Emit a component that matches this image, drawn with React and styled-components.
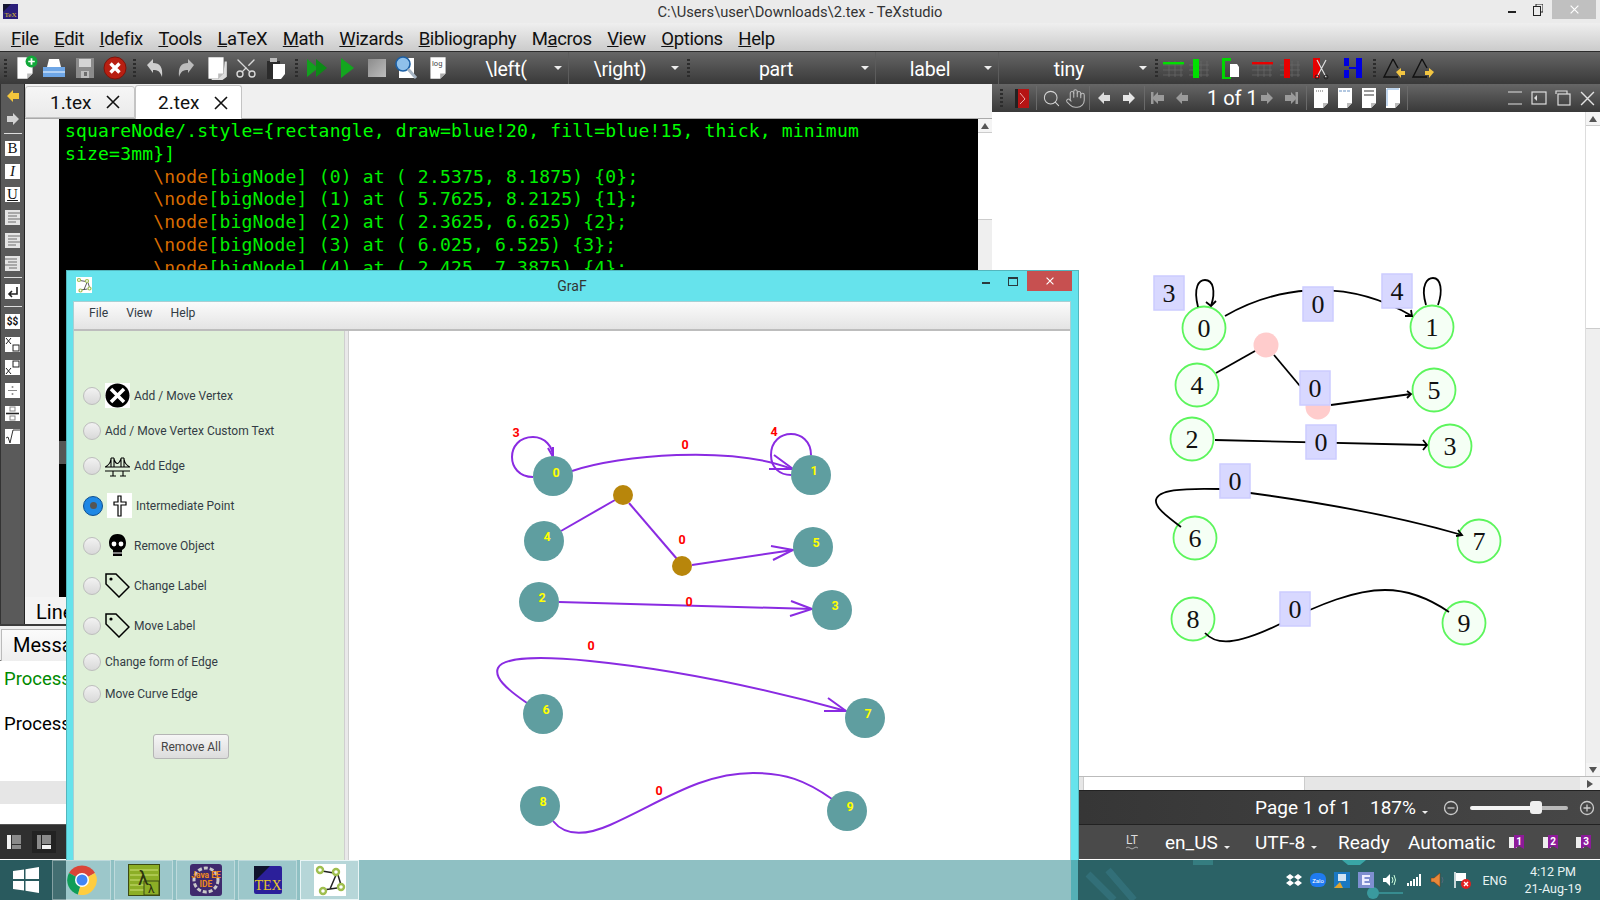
import React from "react";
import styled, { createGlobalStyle } from "styled-components";
import { Hand, Search, Scissors } from "lucide-react";

const UI = `Roboto, "Liberation Sans", sans-serif`;

const GlobalStyle = createGlobalStyle`
  html, body { margin: 0; padding: 0; background: #0c2f33; overflow: hidden; }
  #root { width: 1600px; height: 900px; }
`;

const Desktop = styled.div`
  position: relative;
  width: 1600px;
  height: 900px;
  overflow: hidden;
  display: flex;
  flex-direction: column;
  font-family: ${UI};
`;

/* ---------- TeXstudio ---------- */
const Studio = styled.div`
  height: 860px;
  display: flex;
  flex-direction: column;
  background: #fff;
`;

const TitleBar = styled.div`
  height: 23px;
  display: grid;
  grid-template-columns: 1fr auto 1fr;
  align-items: center;
  background: #ebebeb;
  color: #333;
  font-size: 14.7px;
`;

const TitleIcon = styled.div`
  padding-left: 3px;
  display: flex;
`;

const TitleControls = styled.div`
  display: flex;
  justify-content: flex-end;
  align-items: flex-start;
  height: 23px;
  padding-right: 4px;
`;

const WinBtn = styled.div`
  width: ${(p) => p.$w}px;
  height: 19px;
  display: flex;
  align-items: center;
  justify-content: center;
  background: ${(p) => p.$bg || "transparent"};
  color: #fff;
`;

const MenuBar = styled.div`
  height: 29px;
  box-sizing: border-box;
  display: flex;
  align-items: center;
  padding: 3px 0 0 11px;
  gap: 15.5px;
  background: linear-gradient(#efefef, #cbcbcb);
  color: #111;
  font-size: 18.5px;
  letter-spacing: -0.35px;
  border-bottom: 1px solid #2b2b2b;
`;

const Toolbar = styled.div`
  height: 32px;
  flex: none;
  display: flex;
  align-items: center;
  background: linear-gradient(#666, #4d4d4d 55%, #393939);
`;

const Slot = styled.div`
  width: ${(p) => p.$w}px;
  height: 100%;
  flex: none;
  display: flex;
  align-items: center;
  justify-content: center;
`;

const Grip = styled.div`
  width: ${(p) => p.$w}px;
  height: 100%;
  flex: none;
  display: flex;
  align-items: center;
  justify-content: center;
  &::before {
    content: "";
    width: 3px;
    height: 18px;
    background: repeating-linear-gradient(#2c2c2c 0 2px, transparent 2px 4px);
  }
`;

const Combo = styled.div`
  width: ${(p) => p.$w}px;
  height: 100%;
  flex: none;
  display: flex;
  align-items: center;
  color: #fff;
  font-size: 19.5px;
  letter-spacing: -0.2px;
  border-right: ${(p) => (p.$line ? "1px solid #5c5c5c" : "none")};
`;

const ComboText = styled.span`
  flex: 1;
  padding-top: 2px;
  text-align: center;
`;

const Caret = styled.span`
  width: 0;
  height: 0;
  margin-right: 6px;
  border: 4px solid transparent;
  border-top: 4px solid #eee;
  border-bottom: 0;
`;

const Workspace = styled.div`
  flex: 1;
  display: flex;
  min-height: 0;
`;

const LeftPane = styled.div`
  width: 992px;
  flex: none;
  display: flex;
  flex-direction: column;
`;

const EditorRow = styled.div`
  height: 540px;
  display: flex;
`;

const SideBar = styled.div`
  width: 25px;
  flex: none;
  display: flex;
  flex-direction: column;
  align-items: center;
  background: #5a5a5a;
  border-left: 1px solid #333;
  border-right: 1px solid #222;
  box-sizing: border-box;
`;

const SideArrow = styled.div`
  height: 23px;
  display: flex;
  align-items: center;
`;

const SideRule = styled.div`
  width: 18px;
  height: 1px;
  margin: ${(p) => (p.$tight ? "2px 0 2px" : "3px 0 3px")};
  background: #ddd;
`;

const SideBtn = styled.div`
  width: 15px;
  height: 15px;
  margin: 4px 0;
  background: ${(p) => p.$bg || "#fff"};
  color: #111;
  display: flex;
  align-items: center;
  justify-content: center;
  font: ${(p) => p.$italic ? "italic " : ""}15px "Liberation Serif", serif;
  overflow: hidden;
`;

const EditorCol = styled.div`
  flex: 1;
  min-width: 0;
  display: flex;
  flex-direction: column;
`;

const TabBar = styled.div`
  height: 35px;
  box-sizing: border-box;
  flex: none;
  display: flex;
  align-items: flex-end;
  background: #f0f0f0;
  border-bottom: 1px solid #aaa;
`;

const Tab = styled.div`
  width: ${(p) => p.$w}px;
  height: ${(p) => (p.$on ? 34 : 32)}px;
  box-sizing: border-box;
  margin-bottom: ${(p) => (p.$on ? -1 : 0)}px;
  display: flex;
  align-items: center;
  gap: 15px;
  padding-left: ${(p) => (p.$on ? 22 : 24)}px;
  background: ${(p) => (p.$on ? "#fff" : "linear-gradient(#f6f6f6,#eaeaea)")};
  border: 1px solid #c4c4c4;
  border-bottom: ${(p) => (p.$on ? "0" : "1px solid #c4c4c4")};
  border-radius: 3px 3px 0 0;
  color: #111;
  font-size: 19px;
`;

const CodeRow = styled.div`
  flex: 1;
  min-height: 0;
  display: flex;
  background: #f1f1f1;
`;

const Gutter = styled.div`
  width: 34px;
  flex: none;
`;

const Code = styled.pre`
  position: relative;
  flex: 1;
  margin: 0;
  padding: 1px 0 0 6px;
  overflow: hidden;
  background: #000;
  color: #00ee00;
  font: 18px/22.8px "DejaVu Sans Mono", "Liberation Mono", monospace;
  letter-spacing: 0.19px;
`;

const CodeLine = styled.div`
  height: 22.8px;
  color: ${(p) => (p.$bright ? "#00ff00" : "inherit")};
`;

const Keyword = styled.span`
  color: #d96c00;
`;

const CodeMark = styled.div`
  position: absolute;
  left: 0;
  top: 322px;
  width: 8px;
  height: 23px;
  background: #555;
`;

const EditorScroll = styled.div`
  width: 14px;
  flex: none;
  display: flex;
  flex-direction: column;
  background: #efefef;
`;

const ScrollEnd = styled.div`
  height: 13px;
  display: flex;
  align-items: center;
  justify-content: center;
  background: #f4f4f4;
`;

const ScrollThumb = styled.div`
  height: ${(p) => p.$h}px;
  background: #fff;
  border-top: 1px solid #ccc;
  border-bottom: 1px solid #ccc;
`;

const LineRow = styled.div`
  height: 27px;
  flex: none;
  padding-left: 11px;
  background: #f4f4f4;
  color: #000;
  font-size: 20px;
  line-height: 30px;
`;

const MessageTabs = styled.div`
  height: 37px;
  box-sizing: border-box;
  flex: none;
  padding: 3px 0 0 1px;
  background: #f0f0f0;
  border-top: 2px solid #3c3c3c;
  border-bottom: 1px solid #777;
`;

const MessageTab = styled.div`
  width: 90px;
  height: 32px;
  box-sizing: border-box;
  padding-left: 11px;
  background: linear-gradient(#fbfbfb, #eee);
  border: 1px solid #bbb;
  border-bottom: 0;
  font-size: 20px;
  line-height: 31px;
  color: #000;
`;

const LogBody = styled.div`
  height: 120px;
  flex: none;
  padding: 5px 0 0 4px;
  box-sizing: border-box;
  background: #fff;
  font-size: 18.5px;
`;

const LogLine = styled.div`
  height: 45px;
  line-height: 26px;
  color: ${(p) => (p.$ok ? "#008a00" : "#000")};
`;

const LogBand = styled.div`
  height: 23px;
  flex: none;
  background: #e6e6e6;
`;

const LogFoot = styled.div`
  height: 20px;
  flex: none;
  background: #fff;
`;

const DockBar = styled.div`
  height: 35px;
  flex: none;
  display: flex;
  align-items: center;
  padding-left: 2px;
  background: #2f2f2f;
  border-top: 1px solid #555;
  box-sizing: border-box;
  gap: 6px;
`;

const DockBtn = styled.div`
  width: 24px;
  height: 22px;
  display: flex;
  align-items: center;
  justify-content: center;
  background: ${(p) => (p.$on ? "#222" : "transparent")};
`;

const RightPane = styled.div`
  flex: 1;
  min-width: 0;
  display: flex;
  flex-direction: column;
`;

const PdfToolbar = styled(Toolbar)`
  height: 28px;
  padding-right: 1px;
`;

const Divider = styled.div`
  width: 1px;
  height: 24px;
  margin: 0 2px;
  flex: none;
  background: #6a6a6a;
`;

const PageText = styled.div`
  width: 61px;
  padding-left: 12px;
  box-sizing: border-box;
  flex: none;
  color: #fff;
  font-size: 20px;
  white-space: nowrap;
`;

const Spacer = styled.div`
  flex: 1;
`;

const PdfRow = styled.div`
  height: 664px;
  flex: none;
  display: flex;
  background: #fff;
`;

const PdfPage = styled.div`
  flex: 1;
  min-width: 0;
`;

const PdfScroll = styled.div`
  width: 15px;
  flex: none;
  display: flex;
  flex-direction: column;
  background: #efefef;
  border-left: 1px solid #ddd;
  box-sizing: border-box;
`;

const HScroll = styled.div`
  height: 13px;
  flex: none;
  display: flex;
  justify-content: flex-end;
  align-items: stretch;
  background: #e6e6e6;
  border-top: 1px solid #bbb;
`;

const HThumb = styled.div`
  width: 220px;
  margin-right: 275px;
  background: #fff;
  border: 1px solid #ccc;
  border-width: 0 1px;
`;

const HEnd = styled.div`
  width: 20px;
  display: flex;
  align-items: center;
  justify-content: center;
  background: #f2f2f2;
`;

const StatusBar = styled.div`
  height: ${(p) => p.$h}px;
  flex: none;
  box-sizing: border-box;
  padding-left: ${(p) => p.$left}px;
  display: flex;
  align-items: center;
  color: #fff;
  font-size: 19px;
  background: ${(p) => p.$bg};
  border-top: 1px solid #222;
`;

const StatusCell = styled.div`
  width: ${(p) => p.$w}px;
  flex: none;
  display: flex;
  align-items: center;
  justify-content: ${(p) => (p.$center ? "center" : "flex-start")};
  white-space: nowrap;
`;

const TinyCaret = styled.span`
  width: 0;
  height: 0;
  margin: 10px 0 0 6px;
  border: 3px solid transparent;
  border-top: 3px solid #eee;
  border-bottom: 0;
`;

const Slider = styled.div`
  position: relative;
  width: 98px;
  height: 4px;
  flex: none;
  margin: 0 11px;
  border-radius: 2px;
  background: linear-gradient(to right, #f4f4f4 65%, #b9b9b9 65%);
`;

const SliderThumb = styled.div`
  position: absolute;
  left: 60px;
  top: -5px;
  width: 12px;
  height: 13px;
  border-radius: 3px;
  background: #efefef;
`;

/* ---------- GraF window ---------- */
const GrafWindow = styled.div`
  position: absolute;
  left: 66px;
  top: 270px;
  width: 1013px;
  height: 630px;
  z-index: 1;
  box-sizing: border-box;
  display: flex;
  flex-direction: column;
  padding: 0 7px 0 6px;
  background: #66e3ec;
  border: 1px solid #53b6bd;
  border-bottom: 0;
`;

const GrafTitle = styled.div`
  height: 30px;
  flex: none;
  display: grid;
  grid-template-columns: 1fr auto 1fr;
  align-items: start;
  color: #333;
  font-size: 14px;
`;

const GrafTitleText = styled.div`
  line-height: 19px;
  padding-top: 6px;
`;

const GrafIcon = styled.div`
  margin: 6px 0 0 3px;
  display: flex;
`;

const GrafControls = styled.div`
  display: flex;
  justify-content: flex-end;
  align-items: flex-start;
  margin-right: -1px;
`;

const GrafBtn = styled.div`
  width: ${(p) => p.$w}px;
  height: 20px;
  display: flex;
  align-items: center;
  justify-content: center;
  background: ${(p) => p.$bg || "transparent"};
`;

const GrafBody = styled.div`
  flex: 1;
  display: flex;
  flex-direction: column;
  min-height: 0;
  background: #fff;
  border: 1px solid #a9cfd3;
  border-bottom: 0;
`;

const GrafMenu = styled.div`
  height: 29px;
  box-sizing: border-box;
  flex: none;
  display: flex;
  align-items: center;
  gap: 18px;
  padding: 0 0 6px 15px;
  background: linear-gradient(#fbfbfb, #e4e4e4);
  border-bottom: 2px solid #bdbdbd;
  color: #333c45;
  font-size: 12.2px;
`;

const GrafMain = styled.div`
  flex: 1;
  display: flex;
  min-height: 0;
`;

const ToolPanel = styled.div`
  width: 270px;
  flex: none;
  box-sizing: border-box;
  padding: 47px 0 0 9px;
  display: flex;
  flex-direction: column;
  background: #dff0d8;
`;

const ToolRow = styled.label`
  height: ${(p) => p.$h}px;
  flex: none;
  display: flex;
  align-items: center;
  color: #333c45;
  font-size: 12px;
`;

const Radio = styled.span`
  width: ${(p) => (p.$on ? 18 : 16)}px;
  height: ${(p) => (p.$on ? 18 : 16)}px;
  flex: none;
  margin-right: 4px;
  border-radius: 50%;
  display: flex;
  align-items: center;
  justify-content: center;
  border: 1px solid ${(p) => (p.$on ? "#0f4f8f" : "#bdbdbd")};
  background: ${(p) => (p.$on ? "#1e88e5" : "linear-gradient(#f2f2f2,#d9d9d9)")};
  &::after {
    content: "";
    width: 7px;
    height: 7px;
    border-radius: 50%;
    background: ${(p) => (p.$on ? "#555" : "transparent")};
  }
`;

const ToolIcon = styled.span`
  width: 25px;
  height: 25px;
  flex: none;
  margin-right: 4px;
  display: flex;
`;

const RemoveAll = styled.button`
  align-self: flex-start;
  margin: 27px 0 0 70px;
  width: 76px;
  height: 25px;
  padding: 0;
  font-family: ${UI};
  font-size: 12px;
  color: #444;
  background: linear-gradient(#f6f6f6, #dcdcdc);
  border: 1px solid #b5b5b5;
  border-radius: 3px;
`;

const Splitter = styled.div`
  width: 5px;
  flex: none;
  background: #e9e9e9;
  border-left: 1px solid #cfcfcf;
  border-right: 1px solid #cfcfcf;
  box-sizing: border-box;
`;

const Canvas = styled.div`
  flex: 1;
  min-width: 0;
  background: #fff;
`;

const Drawing = styled.svg`
  display: block;
`;

/* ---------- taskbar ---------- */
const Taskbar = styled.div`
  position: relative;
  z-index: 2;
  height: 40px;
  flex: none;
  display: flex;
  align-items: stretch;
  overflow: hidden;
  background: linear-gradient(
    to right,
    #295a5e 0 66px,
    #8fc0c3 66px 1071px,
    #55b0b6 1071px 1078px,
    #2b6266 1078px
  );
`;

const Wallpaper = styled.svg`
  position: absolute;
  left: 1078px;
  top: 0;
`;

const StartBtn = styled.div`
  width: 52px;
  flex: none;
  display: flex;
  align-items: center;
  justify-content: center;
`;

const TaskBtn = styled.div`
  width: 59px;
  flex: none;
  margin-right: 3px;
  box-sizing: border-box;
  display: flex;
  align-items: center;
  justify-content: center;
  background: ${(p) => (p.$on ? "rgba(255,255,255,.35)" : "rgba(255,255,255,.12)")};
  border: 1px solid ${(p) => (p.$on ? "#e9f5f6" : "rgba(255,255,255,.35)")};
`;

const Tray = styled.div`
  position: relative;
  margin-left: auto;
  display: flex;
  align-items: center;
  padding-right: 11px;
  color: #e8f3f3;
  font-size: 12.5px;
`;

const TrayIcon = styled.div`
  width: 24px;
  flex: none;
  display: flex;
  align-items: center;
  justify-content: center;
`;

const TrayLang = styled.div`
  margin: 0 10px 0 8px;
`;

const Clock = styled.div`
  width: 72px;
  text-align: center;
  line-height: 17px;
`;

/* ---------- small drawings ---------- */
const Svg = ({ s = 24, w, h, box, children }) => (
  <svg width={w || s} height={h || s} viewBox={box || `0 0 ${s} ${s}`}>{children}</svg>
);

const Page = ({ children, s = 24, fold = "#bbb" }) => (
  <Svg s={24} w={s} h={s}>
    <path d="M5 2h14v15l-5 5H5z" fill="#fff" />
    <path d="M14 22v-5h5z" fill={fold} />
    {children}
  </Svg>
);

const Arrow = ({ dir = "left", color = "#ddd", s = 14, bar }) => (
  <svg width={s} height={s} viewBox="0 0 14 14">
    <g transform={dir === "right" ? "translate(14 0) scale(-1 1)" : undefined}>
      <path d="M1 7l6-6v3h6v6H7v3z" fill={color} />
      {bar && <rect x="0" y="1" width="2.5" height="12" fill={color} />}
    </g>
  </svg>
);

const CloseX = ({ s = 14, c = "#111", w = 1.6 }) => (
  <svg width={s} height={s} viewBox="0 0 14 14">
    <path d="M1 1l12 12M13 1L1 13" stroke={c} strokeWidth={w} fill="none" />
  </svg>
);

const Triangle = ({ s = 8, c = "#555", up }) => (
  <svg width={s} height={s} viewBox="0 0 8 8">
    <path d={up ? "M4 1l4 6H0z" : "M4 7L0 1h8z"} fill={c} />
  </svg>
);

const GraphLogo = ({ s }) => (
  <svg width={s} height={s} viewBox="0 0 32 32">
    <rect width="32" height="32" fill="#fff" />
    <g stroke="#222" strokeWidth="1.5">
      <path d="M8 7l12 2M24 11l3 10M22 11l-6 14M9 26l14-2" />
    </g>
    <g fill="#fff" stroke="#9fbe4e" strokeWidth="2.4">
      <circle cx="6" cy="6" r="3" />
      <circle cx="22" cy="8" r="3" />
      <circle cx="27" cy="23" r="3" />
      <circle cx="9" cy="27" r="3" />
    </g>
  </svg>
);

const TableIcon = ({ c, kind }) => (
  <svg width="24" height="22" viewBox="0 0 24 22">
    <g stroke="#6a6a6a" strokeWidth="1" opacity=".7">
      <path d="M2 8h20M2 13h20M2 18h20M8 4v16M14 4v16M20 4v16" fill="none" />
    </g>
    {kind === "row" && <rect x="2" y="5" width="21" height="2.4" fill={c} />}
    {kind === "col" && <rect x="6" y="2" width="6" height="19" fill={c} />}
  </svg>
);

/* ---------- data ---------- */
const codeLines = [
  [0, "squareNode/.style={rectangle, draw=blue!20, fill=blue!15, thick, minimum"],
  [0, "size=3mm}]"],
  [1, "[bigNode] (0) at ( 2.5375, 8.1875) {0};"],
  [1, "[bigNode] (1) at ( 5.7625, 8.2125) {1};"],
  [1, "[bigNode] (2) at ( 2.3625, 6.625) {2};"],
  [1, "[bigNode] (3) at ( 6.025, 6.525) {3};"],
  [1, "[bigNode] (4) at ( 2.425, 7.3875) {4};"],
];

const menuItems = [
  ["", "F", "ile"], ["", "E", "dit"], ["", "I", "defix"], ["", "T", "ools"], ["", "L", "aTeX"],
  ["", "M", "ath"], ["", "W", "izards"], ["", "B", "ibliography"], ["M", "a", "cros"],
  ["", "V", "iew"], ["", "O", "ptions"], ["", "H", "elp"],
];

const grafNodes = [
  ["0", 553, 476, 556, 472], ["1", 811, 475, 814, 470], ["4", 544, 541, 547, 536],
  ["5", 813, 547, 816, 542], ["2", 539, 602, 542, 597], ["3", 832, 610, 835, 605],
  ["6", 543, 714, 546, 709], ["7", 865, 718, 868, 713], ["8", 540, 806, 543, 801],
  ["9", 847, 811, 850, 806],
];

const grafLabels = [
  ["3", 516, 432], ["0", 685, 444], ["4", 774, 431], ["0", 682, 539],
  ["0", 689, 601], ["0", 591, 645], ["0", 659, 790],
];

const grafEdges = [
  "M533 477C505 477 505 437 533 437C545 437 553 447 553 457",
  "M548 448L553 457L553 447",
  "M572 471C620 455 730 445 792 469",
  "M774 455L793 469L769 469",
  "M811 455C811 427 771 427 771 455C771 468 780 475 791 475",
  "M561 531L615 500",
  "M629 503L677 559",
  "M692 565L793 550",
  "M771 546L793 550L773 560",
  "M559 602L812 609",
  "M791 601L812 609L790 616",
  "M527 703C505 688 494 677 498 668C503 657 540 656 590 661C680 670 770 690 846 711",
  "M828 698L846 711L824 711",
  "M553 821C565 836 585 836 610 825C660 803 700 773 753 773C785 773 805 780 832 799",
];

const pdfNodes = [
  ["0", 1204, 329], ["1", 1432, 328], ["4", 1197, 386], ["5", 1434, 391], ["2", 1192, 440],
  ["3", 1450, 447], ["6", 1195, 539], ["7", 1479, 542], ["8", 1193, 620], ["9", 1464, 624],
];

const pdfEdges = [
  "M1198 308C1193 288 1199 281 1205 281C1213 281 1216 292 1211 307",
  "M1206 303L1211 307L1216 302",
  "M1426 306C1420 285 1428 279 1433 279C1441 279 1443 292 1438 306",
  "M1225 317C1270 291 1340 275 1412 317",
  "M1405 317L1412 317L1411 311",
  "M1216 374L1255 352",
  "M1274 356L1300 387",
  "M1331 406L1411 395",
  "M1407 392L1411 395L1407 399",
  "M1215 441L1427 446",
  "M1423 441L1427 446L1423 451",
  "M1181 528C1165 516 1155 508 1156 501C1158 491 1180 489 1220 490C1300 500 1390 515 1462 536",
  "M1456 537L1462 536L1458 531",
  "M1205 634C1216 646 1235 647 1280 625C1320 605 1355 591 1385 591C1410 591 1430 600 1449 613",
];

const pdfSquares = [
  ["3", 1169, 294], ["0", 1318, 305], ["4", 1397, 292], ["0", 1315, 389],
  ["0", 1321, 443], ["0", 1235, 482], ["0", 1295, 610],
];

/* ---------- pieces ---------- */
function MainToolbar() {
  return (
    <Toolbar>
      <Grip $w={11} />
      <Slot $w={28}>
        <Page s={26}>
          <circle cx="18" cy="6" r="5.5" fill="#12a83a" />
          <path d="M18 3v6M15 6h6" stroke="#fff" strokeWidth="1.6" />
        </Page>
      </Slot>
      <Slot $w={29}>
        <Svg>
          <path d="M7 3h10l2 8H5z" fill="#fff" />
          <path d="M1 11h22v10H1z" fill="#6ea6e6" />
          <path d="M1 16h22" stroke="#cfe2f8" strokeWidth="1.4" />
        </Svg>
      </Slot>
      <Slot $w={34}>
        <Svg>
          <path d="M3 2h18v20H3z" fill="#8b8b8b" />
          <path d="M6 3h12v8H6z" fill="#d4d4d4" />
          <path d="M8 15h8v7H8z" fill="#bdbdbd" />
          <path d="M11 16h3v4h-3z" fill="#6d6d6d" />
        </Svg>
      </Slot>
      <Slot $w={26}>
        <Svg>
          <circle cx="12" cy="12" r="11" fill="#b81f12" stroke="#7e140b" />
          <path d="M7.5 7.5l9 9M16.5 7.5l-9 9" stroke="#fff" strokeWidth="3.4" />
        </Svg>
      </Slot>
      <Grip $w={12} />
      <Slot $w={30}>
        <Svg s={22}>
          <path d="M3 8l6-6v4c7 0 10 4 9 14-2-6-4-7-9-7v3z" fill="#cfcfcf" />
        </Svg>
      </Slot>
      <Slot $w={32}>
        <Svg s={22}>
          <path d="M19 8l-6-6v4C6 6 3 10 4 20c2-6 4-7 9-7v3z" fill="#bcbcbc" />
        </Svg>
      </Slot>
      <Slot $w={28}>
        <Page s={26}>
          <path d="M20 6h2v14l-4 3H8v-1h6l5-5z" fill="#ddd" />
        </Page>
      </Slot>
      <Slot $w={32}>
        <Scissors size={24} color="#d8d8d8" strokeWidth={1.4} style={{ transform: "rotate(-90deg)" }} />
      </Slot>
      <Slot $w={28}>
        <Svg>
          <path d="M3 5h13v18H3z" fill="#2b2b2b" />
          <path d="M6 2h7v4H6z" fill="#bbb" />
          <path d="M9 8h12v10l-4 5H9z" fill="#fff" />
        </Svg>
      </Slot>
      <Grip $w={12} />
      <Slot $w={30}>
        <Svg>
          <path d="M2 3l11 9-11 9z" fill="#12a01e" />
          <path d="M11 3l11 9-11 9z" fill="#0c8a16" />
        </Svg>
      </Slot>
      <Slot $w={30}>
        <Svg>
          <path d="M6 2l13 10L6 22z" fill="#13a61f" />
        </Svg>
      </Slot>
      <Slot $w={30}>
        <Svg s={20}>
          <defs>
            <linearGradient id="stopG" x1="0" y1="0" x2="1" y2="1">
              <stop offset="0" stopColor="#8c8c8c" />
              <stop offset="1" stopColor="#bdbdbd" />
            </linearGradient>
          </defs>
          <rect x="1" y="1" width="18" height="18" fill="url(#stopG)" />
        </Svg>
      </Slot>
      <Slot $w={28}>
        <Svg s={26}>
          <path d="M6 3h15v20H6z" fill="#fff" />
          <circle cx="10" cy="9" r="7" fill="#8fc0ea" stroke="#1b5fa5" strokeWidth="1.6" />
          <path d="M15 14l8 9" stroke="#a8b6c4" strokeWidth="3" />
        </Svg>
      </Slot>
      <Slot $w={36}>
        <Page s={26} fold="#aaa">
          <text x="6.5" y="10" fontSize="7" fontFamily="Roboto, sans-serif" fill="#444">log</text>
        </Page>
      </Slot>
      <Slot $w={2} />
      <Combo $w={110} $line><ComboText>\left(</ComboText><Caret /></Combo>
      <Combo $w={116}><ComboText>\right)</ComboText><Caret /></Combo>
      <Grip $w={6} />
      <Combo $w={184} $line><ComboText>part</ComboText><Caret /></Combo>
      <Combo $w={122} $line><ComboText>label</ComboText><Caret /></Combo>
      <Combo $w={154}><ComboText>tiny</ComboText><Caret /></Combo>
      <Grip $w={7} />
      <Slot $w={26}><TableIcon c="#00e000" kind="row" /></Slot>
      <Slot $w={26}><TableIcon c="#00e000" kind="col" /></Slot>
      <Slot $w={36}>
        <Svg>
          <path d="M4 2h9v3H7v16h6v2H4z" fill="#00d800" />
          <path d="M12 8h7l2 3v10h-9z" fill="#fff" />
        </Svg>
      </Slot>
      <Slot $w={28}><TableIcon c="#e80000" kind="row" /></Slot>
      <Slot $w={28}><TableIcon c="#e80000" kind="col" /></Slot>
      <Slot $w={34}>
        <Svg>
          <rect x="4" y="2" width="7" height="20" fill="#e80000" />
          <path d="M8 4l9 17M17 4L8 21" stroke="#ddd" strokeWidth="1.2" />
          <circle cx="8" cy="21" r="2" fill="none" stroke="#222" />
          <circle cx="17" cy="21" r="2" fill="none" stroke="#222" />
        </Svg>
      </Slot>
      <Slot $w={30}>
        <Svg>
          <rect x="3" y="2" width="5" height="8" fill="#0000e0" />
          <rect x="3" y="14" width="5" height="8" fill="#0000e0" />
          <rect x="15" y="2" width="6" height="20" fill="#0000e0" />
          <path d="M8 12h7" stroke="#0000e0" strokeWidth="2" />
        </Svg>
      </Slot>
      <Grip $w={12} />
      <Slot $w={28}>
        <Svg>
          <path d="M11 3L2 21h14" fill="none" stroke="#111" strokeWidth="1.4" />
          <path d="M11 3l5 9" stroke="#111" strokeWidth="1.4" />
          <path d="M14 16l5-4v3h4v4h-4v3z" fill="#f2c542" />
        </Svg>
      </Slot>
      <Slot $w={30}>
        <Svg>
          <path d="M11 3L2 21h14" fill="none" stroke="#111" strokeWidth="1.4" />
          <path d="M11 3l5 9" stroke="#111" strokeWidth="1.4" />
          <path d="M23 16l-5-4v3h-4v4h4v3z" fill="#f2c542" />
        </Svg>
      </Slot>
    </Toolbar>
  );
}

const docLines = [
  <path key="a" d="M7 5h7" stroke="#999" strokeWidth="1.6" strokeDasharray="1 1" />,
  <path key="b" d="M6 5h12" stroke="#9ab7d8" strokeWidth="1.4" strokeDasharray="3 1" />,
  <path key="c" d="M7 5h10M7 9h10" stroke="#999" strokeWidth="2" />,
  <path key="d" d="M6 3h12M6 3v17" stroke="#a9c7e8" strokeWidth="1.4" fill="none" />,
];

function PdfTools() {
  return (
    <PdfToolbar>
      <Grip $w={18} />
      <Slot $w={24}>
        <Svg s={22}>
          <path d="M4 2h14v19H4z" fill="#b51414" />
          <path d="M4 2h3v19H4z" fill="#222" />
          <path d="M9 6l5 6-5 5" stroke="#eaa" strokeWidth="1" fill="none" />
        </Svg>
      </Slot>
      <Divider />
      <Slot $w={24}>
        <Search size={19} color="#d4d4d4" strokeWidth={1.3} />
      </Slot>
      <Slot $w={24}><Hand size={21} color="#bdbdbd" strokeWidth={1.2} /></Slot>
      <Divider />
      <Slot $w={24}><Arrow /></Slot>
      <Slot $w={26}><Arrow dir="right" color="#e6e6e6" /></Slot>
      <Divider />
      <Slot $w={22}><Arrow bar color="#9a9a9a" /></Slot>
      <Slot $w={26}><Arrow color="#9a9a9a" /></Slot>
      <PageText>1 of 1</PageText>
      <Slot $w={22}><Arrow dir="right" color="#9a9a9a" /></Slot>
      <Slot $w={26}><Arrow dir="right" bar color="#9a9a9a" /></Slot>
      <Divider />
      {docLines.map((l, i) => (
        <Slot $w={24} key={i}><Page s={24}>{l}</Page></Slot>
      ))}
      <Divider />
      <Spacer />
      <Slot $w={24}>
        <Svg s={18}><path d="M2 3h14M2 15h14" stroke="#ddd" strokeWidth="1.2" /></Svg>
      </Slot>
      <Slot $w={24}>
        <Svg s={18}>
          <rect x="2" y="3" width="14" height="12" fill="none" stroke="#ddd" strokeWidth="1.2" />
          <path d="M7 6v6L4 9z" fill="#ddd" />
        </Svg>
      </Slot>
      <Slot $w={24}>
        <Svg s={18}>
          <path d="M2 5V2h11v3" fill="none" stroke="#ddd" strokeWidth="1.2" />
          <rect x="4" y="5" width="12" height="11" fill="none" stroke="#ddd" strokeWidth="1.2" />
        </Svg>
      </Slot>
      <Slot $w={24}><CloseX s={15} c="#e2e2e2" w={1.3} /></Slot>
    </PdfToolbar>
  );
}

function SideTools() {
  const lines = [[3, 12], [3, 9], [3, 12], [3, 8]];
  const align = (a) => (
    <Svg s={15}>
      <rect width="15" height="15" fill="#e4e4e4" />
      {lines.map((l, i) => (
        <path key={i} d={`M${a ? 15 - l[0] - l[1] : l[0]} ${3 + i * 3}h${l[1]}`} stroke="#777" strokeWidth="1.1" />
      ))}
    </Svg>
  );
  return (
    <SideBar>
      <SideArrow><Arrow color="#f3c63c" /></SideArrow>
      <SideArrow><Arrow dir="right" color="#d2d2d2" /></SideArrow>
      <SideRule />
      <SideBtn>B</SideBtn>
      <SideBtn $italic>I</SideBtn>
      <SideBtn><u>U</u></SideBtn>
      <SideBtn $bg="#e4e4e4">{align(false)}</SideBtn>
      <SideBtn $bg="#e4e4e4">{align(false)}</SideBtn>
      <SideBtn $bg="#e4e4e4">{align(true)}</SideBtn>
      <SideRule $tight />
      <SideBtn>
        <Svg s={15}><path d="M12 3v7H5M7 7l-3 3 3 3" fill="none" stroke="#222" strokeWidth="1.6" /></Svg>
      </SideBtn>
      <SideRule />
      <SideBtn><b style={{ fontSize: 10, fontFamily: "Roboto" }}>$$</b></SideBtn>
      <SideBtn>
        <Svg s={15}><path d="M1 1l5 6M6 1L1 7" stroke="#222" /><rect x="8" y="8" width="6" height="6" fill="none" stroke="#222" /></Svg>
      </SideBtn>
      <SideBtn>
        <Svg s={15}><path d="M1 8l5 6M6 8l-5 6" stroke="#222" /><rect x="8" y="1" width="6" height="6" fill="none" stroke="#222" /></Svg>
      </SideBtn>
      <SideBtn>
        <Svg s={15}><path d="M3 7.5h9" stroke="#888" /><circle cx="7.5" cy="4" r="1" fill="#888" /><circle cx="7.5" cy="11" r="1" fill="#888" /></Svg>
      </SideBtn>
      <SideBtn>
        <Svg s={15}><path d="M1 7.5h13" stroke="#222" strokeWidth="1.6" /><rect x="5" y="1" width="5" height="4" fill="none" stroke="#888" /><rect x="5" y="10" width="5" height="4" fill="none" stroke="#888" /></Svg>
      </SideBtn>
      <SideBtn>
        <Svg s={15}><path d="M1 9l2-1 2 6 3-13h7" fill="none" stroke="#333" /></Svg>
      </SideBtn>
    </SideBar>
  );
}

function GrafGraph() {
  return (
    <Drawing width="722" height="569" viewBox="349 331 722 569">
      <g fill="none" stroke="#8a2be2" strokeWidth="2">
        {grafEdges.map((d) => <path key={d} d={d} />)}
      </g>
      <circle cx="623" cy="495" r="10" fill="#b8860b" />
      <circle cx="682" cy="566" r="10" fill="#b8860b" />
      {grafNodes.map(([t, x, y]) => (
        <circle key={t} cx={x} cy={y} r="20" fill="#5f9ea0" />
      ))}
      <g fontFamily="Roboto, sans-serif" fontSize="12.5" fontWeight="700" textAnchor="middle" dominantBaseline="central">
        {grafNodes.map(([t, , , lx, ly]) => (
          <text key={t} x={lx} y={ly} fill="#ffff00">{t}</text>
        ))}
        {grafLabels.map(([t, x, y], i) => (
          <text key={i} x={x} y={y} fill="#ff0000">{t}</text>
        ))}
      </g>
    </Drawing>
  );
}

function PdfGraph() {
  return (
    <Drawing width="593" height="664" viewBox="992 113 593 664">
      <circle cx="1266" cy="346" r="12.5" fill="#ffcccc" />
      <circle cx="1318" cy="408" r="12.5" fill="#ffcccc" />
      {pdfNodes.map(([t, x, y]) => (
        <circle key={t} cx={x} cy={y} r="21.5" fill="#f5fff5" stroke="#5cf55c" strokeWidth="1.8" />
      ))}
      <g fill="none" stroke="#000" strokeWidth="1.8">
        {pdfEdges.map((d) => <path key={d} d={d} />)}
      </g>
      {pdfSquares.map(([t, x, y], i) => (
        <rect key={i} x={x - 15} y={y - 17} width="30" height="34" fill="#d8d8ff" stroke="#ccccff" strokeWidth="1.5" />
      ))}
      <g fontFamily={`"Liberation Serif", serif`} fontSize="26" textAnchor="middle" dominantBaseline="central" fill="#111">
        {pdfNodes.map(([t, x, y]) => <text key={t} x={x} y={y}>{t}</text>)}
        {pdfSquares.map(([t, x, y], i) => <text key={i} x={x} y={y}>{t}</text>)}
      </g>
    </Drawing>
  );
}

const TagIcon = () => (
  <Svg s={25}>
    <path d="M1 1h10l13 13-10 10L1 11z" fill="none" stroke="#000" strokeWidth="1.5" />
    <circle cx="6" cy="6" r="1.6" fill="#000" />
  </Svg>
);

const toolRows = [
  { h: 35, text: "Add / Move Vertex", icon: (
    <Svg s={25}>
      <rect width="25" height="25" fill="#fff" />
      <circle cx="12.5" cy="12.5" r="12" fill="#000" />
      <path d="M6 6l13 13M19 6L6 19" stroke="#fff" strokeWidth="3.5" />
    </Svg>
  ) },
  { h: 35, text: "Add / Move Vertex Custom Text" },
  { h: 35, text: "Add Edge", icon: (
    <Svg s={25}>
      <path d="M0 14h25M0 18h25M8 18v5M18 18v5M5 23h6M15 23h6M6 14V5M9 14V5M16 14V5M19 14V5M6 5h3M16 5h3M0 14Q5 12 6 6M9 6q3 9 7 0M19 6q1 6 6 8" stroke="#000" strokeWidth="1.1" fill="none" />
    </Svg>
  ) },
  { h: 45, on: true, text: "Intermediate Point", icon: (
    <Svg s={25}>
      <rect width="25" height="25" fill="#fff" />
      <path d="M11 3h3v6h5v3h-5v11h-3V12H7V9h4z" fill="#fff" stroke="#000" strokeWidth="1.2" />
    </Svg>
  ) },
  { h: 35, text: "Remove Object", icon: (
    <Svg s={25}>
      <path d="M12.5 1C6 1 4 6 4 10c0 4 2 6 4 7v6h9v-6c2-1 4-3 4-7 0-4-2-9-8.500-9z" fill="#000" />
      <circle cx="9" cy="11" r="2.4" fill="#fff" />
      <circle cx="16" cy="11" r="2.4" fill="#fff" />
      <path d="M8 20h9" stroke="#fff" />
    </Svg>
  ) },
  { h: 45, text: "Change Label", icon: <TagIcon /> },
  { h: 35, text: "Move Label", icon: <TagIcon /> },
  { h: 37, text: "Change form of Edge" },
  { h: 27, text: "Move Curve Edge" },
];

const BookMark = ({ n }) => (
  <svg width="16" height="16" viewBox="0 0 16 16">
    <rect x="0" y="3" width="8" height="11" fill="#eee" />
    <path d="M5 1h10v14l-5-3-5 3z" fill="#8d1a9a" />
    <text x="10" y="11" fontSize="10" fontWeight="700" textAnchor="middle" fontFamily="Roboto, sans-serif" fill="#fff">{n}</text>
  </svg>
);

function StudioBottom() {
  return (
    <>
      <StatusBar $h={34} $left={263} $bg="linear-gradient(to right,#333,#474747)">
        <StatusCell $w={115}>Page 1 of 1</StatusCell>
        <StatusCell $w={73}>187%<TinyCaret /></StatusCell>
        <Svg s={16}><circle cx="8" cy="8" r="6.500" fill="none" stroke="#ccc" strokeWidth="1.3" /><path d="M4.500 8h7" stroke="#ccc" strokeWidth="1.3" /></Svg>
        <Slider><SliderThumb /></Slider>
        <Svg s={16}><circle cx="8" cy="8" r="6.500" fill="none" stroke="#ccc" strokeWidth="1.3" /><path d="M4.500 8h7M8 4.500v7" stroke="#ccc" strokeWidth="1.3" /></Svg>
      </StatusBar>
      <StatusBar $h={35} $left={134} $bg="#4a4a4a">
        <StatusCell $w={39}>
          <Svg s={16}>
            <text x="0" y="10" fontSize="12" fontFamily="Roboto, sans-serif" fill="#ddd">LT</text>
            <path d="M0 14q2-2 4 0t4 0 4 0" fill="none" stroke="#aaa" />
          </Svg>
        </StatusCell>
        <StatusCell $w={90}>en_US<TinyCaret /></StatusCell>
        <StatusCell $w={83}>UTF-8<TinyCaret /></StatusCell>
        <StatusCell $w={70}>Ready</StatusCell>
        <StatusCell $w={92}>Automatic</StatusCell>
        <StatusCell $w={34} $center><BookMark n="1" /></StatusCell>
        <StatusCell $w={34} $center><BookMark n="2" /></StatusCell>
        <StatusCell $w={32} $center><BookMark n="3" /></StatusCell>
      </StatusBar>
    </>
  );
}

function BottomTaskbar() {
  return (
    <Taskbar>
      <Wallpaper width="522" height="40" viewBox="0 0 522 40">
        <path d="M10 14L36 40M30 10l26 30" stroke="#3f8a9c" strokeWidth="7" fill="none" opacity=".35" />
        <path d="M115 0h20v5h-20z" fill="#46a7a8" opacity=".4" />
        <path d="M264 0h24l-6 5h-12z" fill="#3db6b6" opacity=".8" />
        <circle cx="295" cy="33" r="6" fill="#3fa9ad" opacity=".8" />
        <path d="M301 33h24" stroke="#3fa9ad" strokeWidth="2" opacity=".6" />
      </Wallpaper>
      <StartBtn>
        <Svg s={26}>
          <path d="M0 4l11-1.500V12H0zM12.500 2.300L26 0v12H12.500zM0 14h11v9.500L0 22zM12.500 14H26v12l-13.500-2.200z" fill="#fff" />
        </Svg>
      </StartBtn>
      <TaskBtn>
        <Svg s={30}>
          <path d="M15 15L28 8a15 15 0 0 0-26 0z" fill="#db4437" />
          <path d="M15 15L2 8a15 15 0 0 0 9 21.500z" fill="#0f9d58" />
          <path d="M15 15l13-7a15 15 0 0 1-17 21.500z" fill="#ffcd40" />
          <circle cx="15" cy="15" r="7" fill="#fff" />
          <circle cx="15" cy="15" r="5.500" fill="#4285f4" />
        </Svg>
      </TaskBtn>
      <TaskBtn>
        <svg width="32" height="32" viewBox="0 0 32 32">
          <rect x=".5" y=".5" width="31" height="31" fill="#8cae26" stroke="#3c4a14" />
          <path d="M2 6h28M2 11h28M2 16h14M2 21h14M2 26h14" stroke="#b7d05c" strokeWidth="1.6" />
          <rect x="16" y="17" width="15" height="14" fill="#8cae26" stroke="#3c4a14" />
          <text x="10" y="21" fontSize="20" fontFamily="Roboto, sans-serif" fill="#2c3410">λ</text>
          <text x="20" y="29" fontSize="12" fontFamily="Roboto, sans-serif" fill="#2c3410">λ</text>
        </svg>
      </TaskBtn>
      <TaskBtn>
        <svg width="32" height="32" viewBox="0 0 32 32">
          <rect width="32" height="32" rx="3" fill="#3f2a6d" />
          <circle cx="16" cy="16" r="12" fill="none" stroke="#c9c9c9" strokeWidth="3" strokeDasharray="4 2" />
          <text x="16" y="14" fontSize="8.500" fontWeight="700" textAnchor="middle" fontFamily="Roboto, sans-serif" fill="#f08a1c">Java EE</text>
          <text x="16" y="23" fontSize="8.500" fontWeight="700" textAnchor="middle" fontFamily="Roboto, sans-serif" fill="#f08a1c">IDE</text>
        </svg>
      </TaskBtn>
      <TaskBtn>
        <svg width="28" height="28" viewBox="0 0 28 28">
          <rect width="28" height="28" rx="2" fill="#2b1f9a" />
          <path d="M0 0h16L0 16z" fill="#10132c" />
          <text x="14" y="24" fontSize="14" textAnchor="middle" fontFamily={`"Liberation Serif", serif`} fill="#e8c72a">TEX</text>
        </svg>
      </TaskBtn>
      <TaskBtn $on><GraphLogo s={32} /></TaskBtn>
      <Tray>
        <TrayIcon>
          <Svg s={16}><path d="M4 2l4 3-4 3-4-3zM12 2l4 3-4 3-4-3zM4 8l4 3-4 3-4-3zM12 8l4 3-4 3-4-3z" fill="#fff" /></Svg>
        </TrayIcon>
        <TrayIcon>
          <Svg s={16}>
            <rect x="0" y="1" width="16" height="14" rx="6" fill="#1f7bf0" />
            <text x="8" y="10.500" fontSize="6" textAnchor="middle" fontFamily="Roboto, sans-serif" fill="#fff">Zalo</text>
          </Svg>
        </TrayIcon>
        <TrayIcon>
          <Svg s={16}>
            <rect width="16" height="16" fill="#1a78c2" />
            <rect x="4" y="2" width="8" height="7" fill="#fff" opacity=".8" />
            <path d="M0 16l6-6 3 6z" fill="#e2a42b" />
          </Svg>
        </TrayIcon>
        <TrayIcon>
          <Svg s={16}>
            <rect width="16" height="16" fill="#7f8fd0" />
            <path d="M4 3h8v2H6.500v2H11v2H6.500v2H12v2H4z" fill="#eef" />
          </Svg>
        </TrayIcon>
        <TrayIcon>
          <Svg s={16}>
            <path d="M1 6h3l4-4v12l-4-4H1z" fill="#fff" />
            <path d="M10 5q2 3 0 6M12 3q3 5 0 10" fill="none" stroke="#cfd" strokeWidth="1" />
          </Svg>
        </TrayIcon>
        <TrayIcon>
          <Svg s={16}><path d="M1 11h2v3H1zM4 9h2v5H4zM7 7h2v7H7zM10 5h2v9h-2zM13 2h2v12h-2z" fill="#fff" /></Svg>
        </TrayIcon>
        <TrayIcon>
          <Svg s={16}>
            <path d="M1 6h3l6-5v14l-6-5H1z" fill="#e8883a" stroke="#7a3a10" strokeWidth=".5" />
            <path d="M12 5q2 3 0 6" fill="none" stroke="#567" />
          </Svg>
        </TrayIcon>
        <TrayIcon>
          <Svg s={18}>
            <path d="M2 1v16" stroke="#fff" strokeWidth="1.5" />
            <path d="M3 2h10v8H3z" fill="#fff" />
            <circle cx="13" cy="13" r="5" fill="#e02020" />
            <path d="M11 11l4 4M15 11l-4 4" stroke="#fff" strokeWidth="1.4" />
          </Svg>
        </TrayIcon>
        <TrayLang>ENG</TrayLang>
        <Clock>4:12 PM<br />21-Aug-19</Clock>
      </Tray>
    </Taskbar>
  );
}

export default function App() {
  return (
    <Desktop>
      <GlobalStyle />
      <Studio>
        <TitleBar>
          <TitleIcon>
            <svg width="15" height="15" viewBox="0 0 15 15">
              <rect width="15" height="15" fill="#2b1f7a" />
              <path d="M0 0h8L0 8z" fill="#151530" />
              <text x="7.500" y="13" fontSize="7" textAnchor="middle" fontFamily={`"Liberation Serif", serif`} fill="#e0c030">TeX</text>
            </svg>
          </TitleIcon>
          <div>C:\Users\user\Downloads\2.tex - TeXstudio</div>
          <TitleControls>
            <WinBtn $w={24}><svg width="8" height="8"><rect y="5" width="8" height="2" fill="#222" /></svg></WinBtn>
            <WinBtn $w={28}>
              <svg width="10" height="12" viewBox="0 0 10 12"><path d="M3 2V0h7v8H8" fill="none" stroke="#222" /><rect x=".5" y="2.500" width="7" height="9" fill="none" stroke="#222" /></svg>
            </WinBtn>
            <WinBtn $w={44} $bg="#c0c0c0"><CloseX s={9} c="#fff" w={1.8} /></WinBtn>
          </TitleControls>
        </TitleBar>
        <MenuBar>
          {menuItems.map(([a, b, c]) => (
            <span key={a + b + c}>{a}<u>{b}</u>{c}</span>
          ))}
        </MenuBar>
        <MainToolbar />
        <Workspace>
          <LeftPane>
            <EditorRow>
              <SideTools />
              <EditorCol>
                <TabBar>
                  <Tab $w={110}>1.tex<CloseX /></Tab>
                  <Tab $w={107} $on>2.tex<CloseX /></Tab>
                </TabBar>
                <CodeRow>
                  <Gutter />
                  <Code>
                    {codeLines.map(([isNode, t], i) => (
                      <CodeLine key={i} $bright={!isNode}>
                        {isNode ? <>{"        "}<Keyword>\node</Keyword>{t}</> : t}
                      </CodeLine>
                    ))}
                    <CodeMark />
                  </Code>
                  <EditorScroll>
                    <ScrollEnd><Triangle up /></ScrollEnd>
                    <ScrollThumb $h={86} />
                  </EditorScroll>
                </CodeRow>
                <LineRow>Line</LineRow>
              </EditorCol>
            </EditorRow>
            <MessageTabs><MessageTab>Messages</MessageTab></MessageTabs>
            <LogBody>
              <LogLine $ok>Process</LogLine>
              <LogLine>Process</LogLine>
            </LogBody>
            <LogBand />
            <LogFoot />
            <DockBar>
              <DockBtn>
                <Svg s={16}><rect x="1" y="1" width="4" height="14" fill="#f2f2f2" /><rect x="6" y="1" width="9" height="9" fill="#8a8a8a" /><rect x="6" y="11" width="9" height="4" fill="#8a8a8a" /></Svg>
              </DockBtn>
              <DockBtn $on>
                <Svg s={16}><rect x="1" y="1" width="4" height="14" fill="#8a8a8a" /><rect x="6" y="1" width="9" height="9" fill="#8a8a8a" /><rect x="6" y="11" width="9" height="4" fill="#f2f2f2" /></Svg>
              </DockBtn>
            </DockBar>
          </LeftPane>
          <RightPane>
            <PdfTools />
            <PdfRow>
              <PdfPage><PdfGraph /></PdfPage>
              <PdfScroll>
                <ScrollEnd><Triangle up /></ScrollEnd>
                <ScrollThumb $h={202} />
                <Spacer />
                <ScrollEnd><Triangle /></ScrollEnd>
              </PdfScroll>
            </PdfRow>
            <HScroll>
              <HThumb />
              <HEnd><svg width="6" height="8" viewBox="0 0 6 8"><path d="M0 0l6 4-6 4z" fill="#555" /></svg></HEnd>
            </HScroll>
            <StudioBottom />
          </RightPane>
        </Workspace>
      </Studio>

      <GrafWindow>
        <GrafTitle>
          <GrafIcon><GraphLogo s={16} /></GrafIcon>
          <GrafTitleText>GraF</GrafTitleText>
          <GrafControls>
            <GrafBtn $w={26}><svg width="8" height="8"><rect y="5" width="8" height="2" fill="#2b3a3d" /></svg></GrafBtn>
            <GrafBtn $w={28}>
              <svg width="10" height="9"><rect x=".5" y=".5" width="9" height="8" fill="none" stroke="#2b3a3d" /><rect width="10" height="2" fill="#2b3a3d" /></svg>
            </GrafBtn>
            <GrafBtn $w={45} $bg="#c75050"><CloseX s={8} c="#fff" w={2} /></GrafBtn>
          </GrafControls>
        </GrafTitle>
        <GrafBody>
          <GrafMenu><span>File</span><span>View</span><span>Help</span></GrafMenu>
          <GrafMain>
            <ToolPanel>
              {toolRows.map((r) => (
                <ToolRow key={r.text} $h={r.h}>
                  <Radio $on={r.on} />
                  {r.icon && <ToolIcon>{r.icon}</ToolIcon>}
                  {r.text}
                </ToolRow>
              ))}
              <RemoveAll>Remove All</RemoveAll>
            </ToolPanel>
            <Splitter />
            <Canvas><GrafGraph /></Canvas>
          </GrafMain>
        </GrafBody>
      </GrafWindow>

      <BottomTaskbar />
    </Desktop>
  );
}
